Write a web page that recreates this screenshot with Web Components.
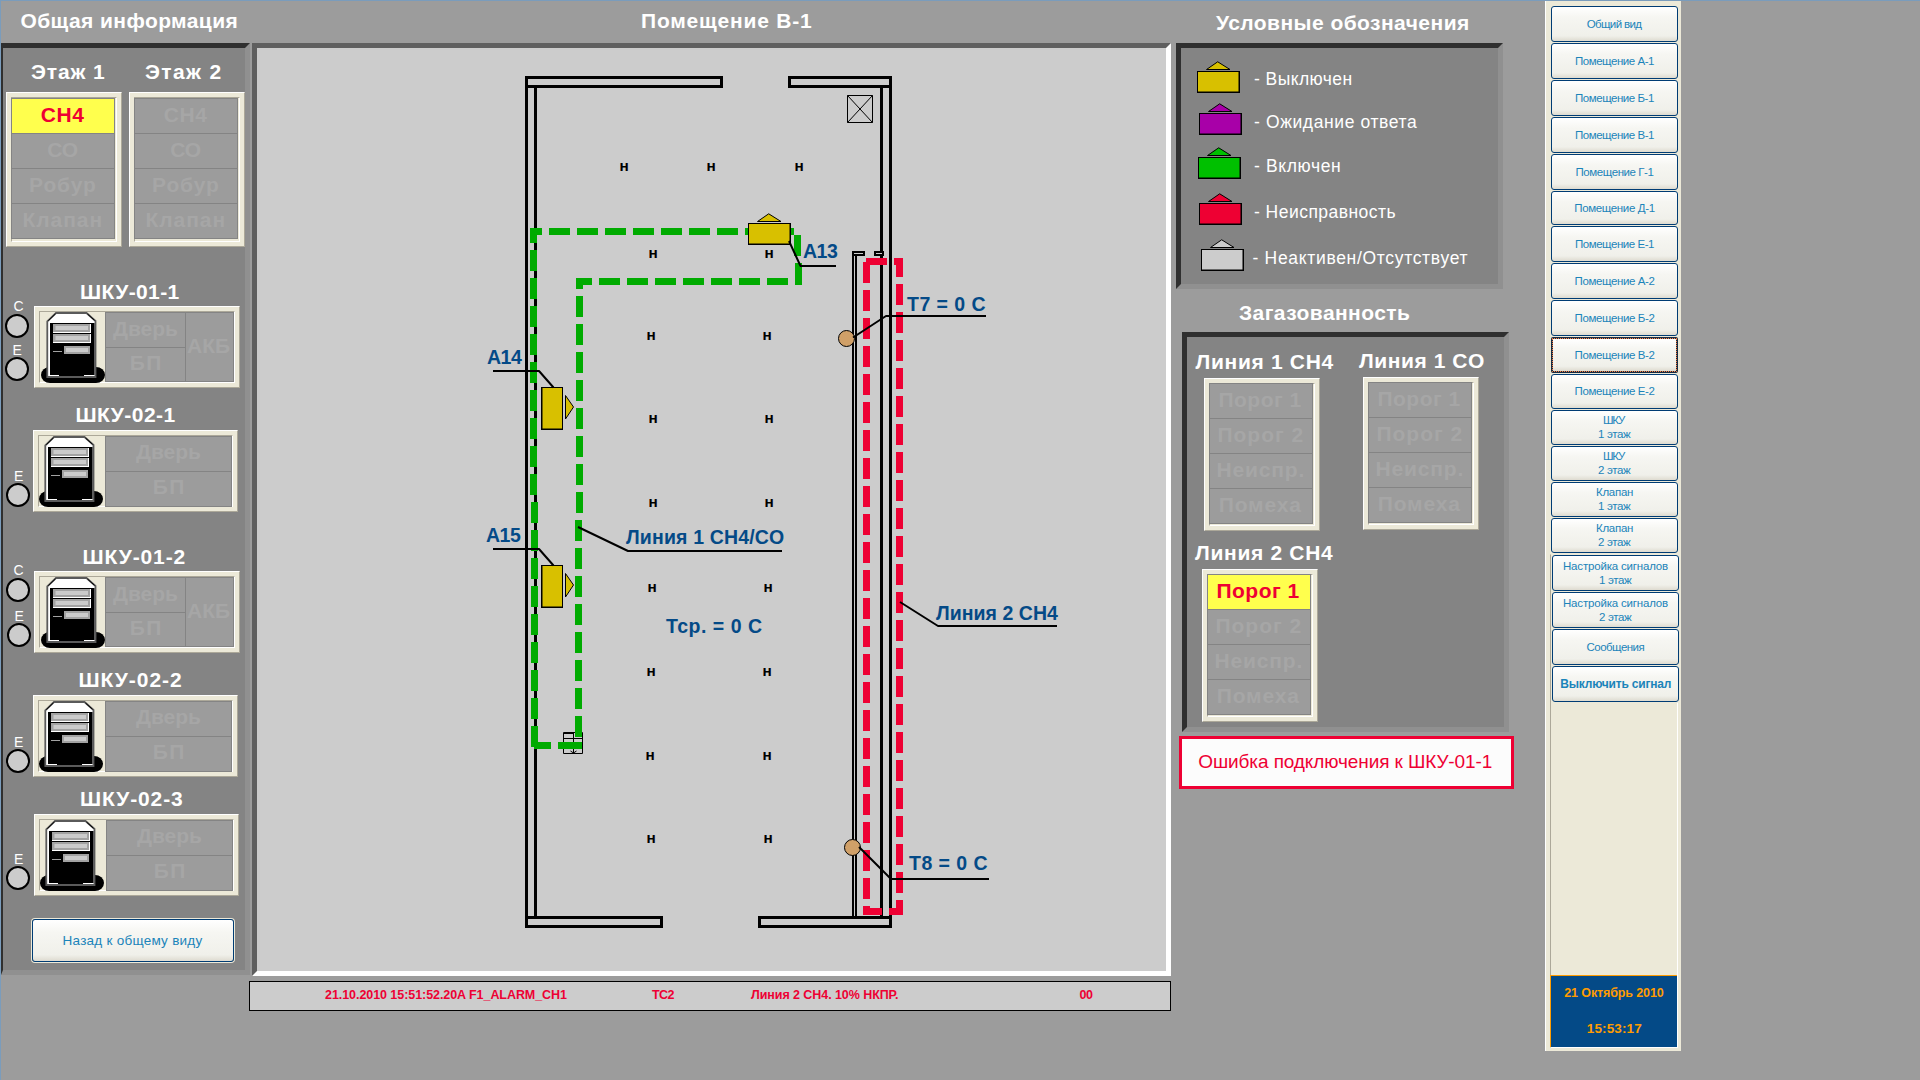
<!DOCTYPE html>
<html lang="ru">
<head>
<meta charset="utf-8">
<title>Помещение В-1</title>
<style>
  html, body { margin: 0; padding: 0; }
  body { width: 1920px; height: 1080px; overflow: hidden; background: #9c9c9c; font-family: "Liberation Sans", Arial, sans-serif; }
</style>
</head>
<body>
<scada-screen></scada-screen>
<script>
const ctx = document.createElement('canvas').getContext('2d');
const FAMILY = '"Liberation Sans", Arial, sans-serif';

/* Text whose box is its ink: w = width, h = capital height, s = font size. */
class InkText extends HTMLElement {
  connectedCallback() {
    if (this.shadowRoot) return;
    const root = this.attachShadow({ mode: 'open' });
    const w = +this.getAttribute('w'), h = +(this.getAttribute('h') || 15);
    const s = +(this.getAttribute('s') || 21), weight = this.getAttribute('weight') || 'bold';
    const family = this.hasAttribute('wide') ? '"DejaVu Sans", sans-serif' : FAMILY;
    const text = this.textContent;
    ctx.font = `${weight} ${s}px ${family}`;
    const m = ctx.measureText(text);
    const ink = m.actualBoundingBoxLeft + m.actualBoundingBoxRight;
    const ls = text.length > 1 ? (w - ink) / (text.length - 1) : 0;
    const asc = Math.round(s * .905), desc = Math.round(s * .212);
    root.innerHTML = `<style>
      :host { display: flow-root; flex: none; width: ${w}px; height: ${h}px; }
      span { display: block; white-space: pre; width: max-content; font: ${weight} ${s}px/${asc + desc}px ${family};
        letter-spacing: ${ls.toFixed(3)}px; margin: ${h - asc}px 0 0 ${m.actualBoundingBoxLeft.toFixed(2)}px; }
    </style><span><slot></slot></span>`;
  }
}
customElements.define('ink-text', InkText);

const define = (name, css, html) => customElements.define(name, class extends HTMLElement {
  connectedCallback() {
    if (this.shadowRoot) return;
    this.attachShadow({ mode: 'open' }).innerHTML = `<style>${css}</style>` + (typeof html === 'function' ? html(this) : html);
  }
});

define('sunken-panel', `
  :host { display: block; box-sizing: border-box; flex: none; background: #848484; border: 5px solid;
    border-color: #2f2f2f #909090 #909090 #2f2f2f; }`, '<slot></slot>');

define('bevel-frame', `
  :host { display: block; box-sizing: border-box; flex: none; background: #ece9d8; padding: 4px;
    border: 1px solid; border-color: #fff #aca899 #aca899 #fff; }
  div { box-sizing: border-box; height: 100%; display: flex; border: 1px solid; border-color: #aca899 #fff #fff #aca899; }`,
  '<div><slot></slot></div>');

/* Four stacked alarm cells inside a bevelled frame. */
define('level-box', `
  :host { display: block; }
  bevel-frame { width: 116px; height: 155px; }
  .grid { box-sizing: border-box; width: 104px; height: 141px; margin-left: -1px; flex: none; background: #848484;
    display: flex; flex-direction: column; gap: 1px; padding: 1px; }
  :host([tight]) bevel-frame { height: 153px; }
  :host([tight]) .grid { margin-top: -1px; }
  .c { height: 34px; display: flex; align-items: center; justify-content: center; background: #9c9c9c; color: #a6a6a6;
    box-sizing: border-box; padding: 0 1px 3px 0; }
  .on { background: #ffff4d; color: #ee0033; }`,
  el => {
    const items = el.getAttribute('items').split('|').map(t => t.split(':'));
    return `<bevel-frame><div class="grid">${items.map(([t, w], i) =>
      `<div class="c ${i === 0 && el.hasAttribute('alarm') ? 'on' : ''}"><ink-text w="${w}">${t}</ink-text></div>`).join('')}</div></bevel-frame>`;
  });

define('cabinet-icon', `:host { display: block; flex: none; width: 65px; height: 71px; } svg { display: block; overflow: visible; }`,
  `<svg width="65" height="71" viewBox="0 0 65 71">
    <rect x="1" y="55" width="64" height="16" rx="9" ry="8"/>
    <path d="M7.3 65V9.3L16 1H46.500L55.500 9V65Z" fill="#fff" stroke="#5a5a5a" stroke-width="1.8"/>
    <path d="M15.500 1.800L8.300 8.800M47.500 2L54.500 8.300" stroke="#000" stroke-width="1"/>
    <path d="M10 11H54.500V63H44V64H19V63H10Z"/>
    <path d="M13 12H51V21H13ZM13 22H51V31H13Z" fill="#fff"/>
    <path d="M13 12H50V20H13ZM13 22H50V30H13ZM24 34H50V42H24Z" fill="#a2a2a2"/>
    <path d="M15.500 14H48V18H15.500ZM15.500 24H48V28H15.500ZM26 36H48V40H26Z" fill="#cbcbcb"/>
    <path d="M13 39.500H22" stroke="#a2a2a2"/>
  </svg>`);

/* One cabinet: title, lamps at the left, status table at the right. */
define('cabinet-unit', `
  :host { display: block; color: #fff; }
  .body { display: flex; align-items: flex-end; height: 82px; margin-top: 8px; }
  :host([close]) .body { margin-top: 7px; }
  .lamps { flex: none; display: flex; flex-direction: column; }
  .lamp { box-sizing: border-box; width: 24px; height: 24px; border: 2px solid #000; border-radius: 50%; background: #ccc; }
  .table { flex: 1; display: flex; gap: 1px; background: #848484; box-sizing: border-box; padding: 1px; height: 70px; color: #a6a6a6; }
  .table.two { height: 71px; }
  .col { display: flex; flex-direction: column; gap: 1px; flex: 1; }
  .c { flex: 1; display: flex; align-items: center; justify-content: center; background: #9c9c9c; box-sizing: border-box; padding-bottom: 3px; }
  .akb { flex: none; width: 47px; }
  .akb .c { padding: 0 2px 4px 0; }
  .two .c { padding-bottom: 4px; }
  .two .c + .c { padding-bottom: 5px; }`,
  el => {
    const a = n => +el.getAttribute(n);
    const lamps = JSON.parse(el.getAttribute('lamps'));
    const akb = el.hasAttribute('akb');
    return `<ink-text w="${a('tw')}" style="margin-left:${a('tx')}px">${el.getAttribute('name')}</ink-text>
    <div class="body">
      <div class="lamps" style="width:${a('bx')}px;padding-bottom:${a('pb')}px">${lamps.map(([t, lx, cx, top, gap]) =>
        `<ink-text w="8.500" h="9" s="14" weight="normal" style="margin:${top}px 0 ${gap}px ${lx}px">${t}</ink-text><div class="lamp" style="margin-left:${cx}px"></div>`).join('')}</div>
      <bevel-frame style="width:${a('bw')}px;height:82px">
        <cabinet-icon style="margin:0 ${a('im')}px 0 ${a('io')}px"></cabinet-icon>
        <div class="table ${akb ? '' : 'two'}"><div class="col">
          <div class="c"><ink-text w="65">Дверь</ink-text></div><div class="c"><ink-text w="29.500">БП</ink-text></div></div>
          ${akb ? '<div class="col akb"><div class="c"><ink-text w="43">АКБ</ink-text></div></div>' : ''}
        </div>
      </bevel-frame>
    </div>`;
  });

define('xp-button', `
  :host { display: flex; flex-direction: column; align-items: center; box-sizing: border-box; flex: none; color: #1b84ba;
    border: 1px solid #003c74; border-radius: 3px; background: linear-gradient(#fff, #f6f6f2 30%, #f0f0ea 85%, #dedbd0);
    box-shadow: 0 0 0 1px #ece9d8; }
  :host([focused]) { border-width: 2px; border-color: #172c44; outline: 1px dotted #ff8040; outline-offset: -2px; border-radius: 2px; }`,
  '<slot></slot>');

const beacon = (fill, x = 0, y = 0) => `<g transform="translate(${x} ${y})">
  <path d="M9.500 8.500L20.700 .8L33 8.500Z" fill="${fill}" stroke="#000"/>
  <rect x="0" y="10" width="43" height="22"/><rect x="1" y="11" width="40.500" height="19.500" fill="${fill}"/></g>`;

define('beacon-icon', `:host { display: block; flex: none; } svg { display: block; }`,
  el => `<svg width="43" height="32">${beacon(el.getAttribute('color'))}</svg>`);

define('legend-panel', `
  :host { display: block; }
  sunken-panel { width: 327px; height: 246px; padding-top: 13px; color: #fff; }
  .row { display: flex; height: 32px; align-items: flex-start; }`,
  () => `<sunken-panel>${[
    ['#d8c000', 16, 0, 'Выключен', 73, 97.5, 12],
    ['#a800a8', 18, 10, 'Ожидание ответа', 73, 163, 13],
    ['#00c000', 17, 12, 'Включен', 73, 86, 13],
    ['#ee0033', 18, 14, 'Неисправность', 73, 141.5, 13],
    ['#cccccc', 20, 14, 'Неактивен/Отсутствует', 71.5, 215, 13]
  ].map(([c, x, mt, t, tx, w, ty]) => `<div class="row" style="margin:${mt}px 0 0 ${x}px"><beacon-icon color="${c}"></beacon-icon>
    <ink-text w="${w}" h="12" s="17.500" weight="normal" style="margin:${ty}px 0 0 ${tx - x - 43}px">- ${t}</ink-text></div>`).join('')}</sunken-panel>`);

define('gas-panel', `
  :host { display: block; color: #fff; }
  sunken-panel { width: 327px; height: 400px; }
  .row { display: flex; height: 194px; }
  .col { flex: none; display: flex; flex-direction: column; }
  level-box { margin-top: 9px; }`,
  () => {
    const items = 'Порог 1:82|Порог 2:84|Неиспр.:86|Помеха:81.5';
    return `<sunken-panel>
      <div class="row">
        <div class="col" style="margin:17px 0 0 8.500px;width:163.500px"><ink-text w="138">Линия 1 CH4</ink-text><level-box tight items="${items}" style="margin-left:8.500px"></level-box></div>
        <div class="col" style="margin-top:16px"><ink-text w="125">Линия 1 CO</ink-text><level-box tight items="${items}" style="margin-left:4px"></level-box></div>
      </div>
      <div class="row"><div class="col" style="margin:14px 0 0 8px"><ink-text w="138">Линия 2 CH4</ink-text><level-box tight alarm items="${items}" style="margin-left:7px"></level-box></div></div>
    </sunken-panel>`;
  });

/* Drawing of the room; coordinates are those of the whole screen. */
define('floor-plan', `
  :host { display: block; position: relative; box-sizing: border-box; width: 919px; height: 933px; flex: none;
    background: #ccc; border: 5px solid; border-color: #5f5f5f #fff #fff #5f5f5f; }
  svg { display: block; }
  ink-text { position: absolute; color: #044a87; }
  ink-text.h { color: #000; }`,
  () => {
    const box = (x1, y1, x2, y2, s) => `<rect x="${x1 + s / 2}" y="${y1 + s / 2}" width="${x2 - x1 - s}" height="${y2 - y1 - s}" stroke-width="${s}"/>`;
    const bar = (x1, y1, x2, y2) => `M${x1} ${y1}H${x2}V${y2}H${x1}Z`;
    const run = (vertical, c, from, to, start) => {
      let d = '';
      for (let p = start; p < to; p += 28) {
        const a = Math.max(p, from), b = Math.min(p + 21, to);
        if (b > a) d += vertical ? bar(c, a, c + 7, b) : bar(a, c, b, c + 7);
      }
      return d;
    };
    const green = run(0, 228, 530, 794, 521) + run(1, 530, 228, 500, 222) + run(1, 531, 502, 747, 502)
      + run(0, 278, 576, 790, 571) + run(1, 576, 278, 515, 268) + run(1, 575, 520, 737, 520)
      + bar(794, 235, 801, 256) + bar(795, 263, 802, 285) + bar(534, 742, 551, 749) + bar(558, 742, 582, 749);
    const red = bar(866, 258, 887, 265) + bar(894, 258, 903, 265) + run(1, 863, 262, 915, 262) + run(1, 896, 258, 915, 256)
      + bar(863, 908, 882, 915) + bar(889, 908, 903, 915);
    const hs = [[624,171],[711,171],[799,171],[653,258],[769,258],[651,340],[767,340],[653,423],[769,423],[653,507],[769,507],
      [652,592],[768,592],[651,676],[767,676],[650,760],[767,760],[651,843],[768,843]];
    const side = y => `<rect x="541" y="${y}" width="22" height="43"/><rect x="542.500" y="${y + 1}" width="19.500" height="40.500" fill="#d8c000"/>
      <path d="M565.500 ${y + 8.5}L573.500 ${y + 20}L565.500 ${y + 32}Z" fill="#d8c000" stroke="#000"/>`;
    const at = (t, x, base, w) => `<ink-text w="${w}" h="14" s="19.500" style="left:${x - 257}px;top:${base - 14 - 48}px">${t}</ink-text>`;
    return `<svg width="909" height="923" viewBox="257 48 909 923">
      <path d="M525 76h3v852h-3ZM534 88h3v828h-3ZM880 88h3v828h-3ZM889 76h3v852h-3ZM852 251h2v665h-2ZM855 256h2v660h-2Z"/>
      <g fill="#ccc" stroke="#000">${box(525,76,723,88,3)}${box(788,76,892,88,3)}${box(525,916,663,928,3)}${box(758,916,892,928,3)}
        ${box(852,251,865,256,2)}${box(874,251,884,256,2)}</g>
      <path d="M847.500 95.500h25v27h-25ZM847.500 95.500l25 27M872.500 95.500l-25 27" fill="none" stroke="#000"/>
      <path d="M563.500 732.500h19v21h-19ZM563 733.500h11M573.500 733v20M564 738.500h18M573 743.500h9M570.500 751l3 2 3-2" fill="none" stroke="#000"/>
      <path d="${green}" fill="#00ab00"/><path d="${red}" fill="#ee0033"/>
      ${beacon('#d8c000', 748, 213)}${side(387)}${side(565)}
      <g fill="#d0a068" stroke="#000"><circle cx="846.500" cy="338.500" r="8"/><circle cx="852.500" cy="847.500" r="8"/></g>
      <g fill="none" stroke="#000" stroke-width="2" stroke-linejoin="round">
        <path d="M800 266H836M789 241L800.500 266" /><path d="M493 371H539L553.500 387.500M493 549H539L553.500 565.500"/>
        <path d="M578 527L628 551H782M853 337.500L886 316H986M900 602L938 626H1057M859 847L891 879H989"/></g>
    </svg>
    ${hs.map(([x, y]) => `<ink-text class="h" wide w="8" h="8" s="11" style="left:${x - 3.5 - 257}px;top:${y - 7 - 48}px">H</ink-text>`).join('')}
    ${at('A13', 803, 258, 35)}${at('A14', 487, 364, 35)}${at('A15', 486, 542, 35)}${at('T7 = 0 C', 907, 311, 78.5)}${at('T8 = 0 C', 909, 870, 78.5)}
    ${at('Линия 1 CH4/CO', 626, 544, 158)}${at('Линия 2 CH4', 936, 620, 122)}${at('Тср. = 0 C', 666, 633, 96)}`;
  });

define('alarm-bar', `
  :host { display: flex; box-sizing: border-box; width: 922px; height: 30px; border: 1px solid #000; background: #ccc; color: #ee0033; padding: 8px 0 0 75px; }`,
  `<ink-text w="242.500" h="9" s="12.500">21.10.2010 15:51:52.20A F1_ALARM_CH1</ink-text>
   <ink-text w="22.500" h="9" s="12.500" style="margin-left:84.500px">TC2</ink-text>
   <ink-text w="147" h="9" s="12.500" style="margin-left:76.500px">Линия 2 CH4. 10% НКПР.</ink-text>
   <ink-text w="13.500" h="9" s="12.500" style="margin-left:181.500px">00</ink-text>`);

define('nav-column', `
  :host { display: flex; flex-direction: column; box-sizing: border-box; flex: none; width: 136px; height: 1050px; background: #ece9d8; border-left: 1px solid #fff; padding-top: 5px; }
  xp-button { width: 127px; margin: 0 0 1px 5px; }
  .well { box-sizing: border-box; width: 128px; height: 494px; margin: 0 0 0 4px; border: 1px solid; border-color: transparent #fff #fff #aca899; display: flex; flex-direction: column; }
  .well xp-button { margin: 0 0 1px 1px; }
  .clock { box-sizing: border-box; width: 127px; height: 72px; margin: auto 0 0 -1px; background: #044a87; color: #ff9c00; border: solid #ff9c00; border-width: 1px 0 0 1px;
    display: flex; flex-direction: column; align-items: center; }`,
  () => {
    const btn = (height, lines, extra = '') => `<xp-button ${extra} style="height:${height}px">${lines.map(([t, w, mt, weight]) =>
      `<ink-text w="${w}" h="9" s="${weight ? 12 : 11.5}" weight="${weight || 'normal'}" style="margin-top:${mt}px">${t}</ink-text>`).join('')}</xp-button>`;
    const room = (n, h = 36, w = 79, extra) => btn(h, [['Помещение ' + n, w, extra ? 11 : h === 36 ? 12 : 11]], extra);
    return btn(36, [['Общий вид', 55.5, 12]]) + room('А-1') + room('Б-1') + room('В-1') + room('Г-1', 36, 78)
      + room('Д-1', 34, 80.5) + room('Е-1') + room('А-2', 36, 80) + room('Б-2', 36, 80) + room('В-2', 36, 80, 'focused') + room('Е-2', 35, 80)
      + btn(35, [['ШКУ', 23, 4], ['1 этаж', 33, 5]]) + btn(35, [['ШКУ', 23, 4], ['2 этаж', 33, 5]])
      + btn(35, [['Клапан', 37, 4], ['1 этаж', 33, 5]]) + btn(35, [['Клапан', 37, 4], ['2 этаж', 33, 5]])
      + `<div class="well">${btn(36, [['Настройка сигналов', 105, 5], ['1 этаж', 33, 5]]) + btn(36, [['Настройка сигналов', 105, 5], ['2 этаж', 33, 5]])
      + btn(36, [['Сообщения', 58, 12]]) + btn(36, [['Выключить сигнал', 110.5, 12, 'bold']])}
      <div class="clock"><ink-text w="99.500" h="9" s="12.500" style="margin-top:12px">21 Октябрь 2010</ink-text><ink-text w="54.500" h="10" s="13.500" style="margin-top:26px">15:53:17</ink-text></div></div>`;
  });

define('overview-panel', `
  :host { display: block; color: #fff; }
  sunken-panel { width: 249px; height: 932px; border-left-width: 2px; display: flex; flex-direction: column; }
  .floors { display: flex; gap: 7px; margin: 16px 0 0 3px; height: 183px; }
  .floors > div { width: 116px; }
  level-box { margin-top: 13px; }
  .back { width: 202px; height: 43px; margin: 23px 0 0 29px; }`,
  () => {
    const items = 'CH4:43.5|CO:30.5|Робур:65|Клапан:78';
    return `<sunken-panel>
      <div class="floors">
        <div><ink-text w="74" style="margin-left:25px">Этаж 1</ink-text><level-box alarm items="${items}"></level-box></div>
        <div><ink-text w="75.500" style="margin-left:16px">Этаж 2</ink-text><level-box items="${items}"></level-box></div>
      </div>
      <cabinet-unit akb close name="ШКУ-01-1" tx="78" tw="98.500" bx="31" bw="206" io="0" im="0" pb="7" lamps='[["C",10.5,2,0,3],["E",10.5,2,8,2]]' style="margin-top:37px"></cabinet-unit>
      <cabinet-unit name="ШКУ-02-1" tx="73.500" tw="99" bx="30" bw="205" io="-1" im="2" pb="5" lamps='[["E",12,3,0,2]]' style="margin-top:19px"></cabinet-unit>
      <cabinet-unit akb close name="ШКУ-01-2" tx="80.500" tw="101" bx="31" bw="206" io="0" im="0" pb="6" lamps='[["C",10.5,3,0,3],["E",12.5,4,10,2]]' style="margin-top:37px"></cabinet-unit>
      <cabinet-unit name="ШКУ-02-2" tx="76.500" tw="101.500" bx="30" bw="205" io="-1" im="2" pb="4" lamps='[["E",12,3,0,2]]' style="margin-top:19px"></cabinet-unit>
      <cabinet-unit name="ШКУ-02-3" tx="78" tw="101" bx="31" bw="205" io="-1" im="2" pb="6" lamps='[["E",12,3,0,2]]' style="margin-top:14px"></cabinet-unit>
      <xp-button class="back"><ink-text w="139" h="10" s="13.500" weight="normal" style="margin-top:15px">Назад к общему виду</ink-text></xp-button>
    </sunken-panel>`;
  });

define('error-banner', `
  :host { display: flex; align-items: center; justify-content: center; box-sizing: border-box; width: 335px; height: 53px; border: 3px solid #ee0033; background: #fcfcfc; color: #ee0033; padding: 0 3px 3px 0; }`,
  '<ink-text w="293.500" h="14" s="19" weight="normal">Ошибка подключения к ШКУ-01-1</ink-text>');

define('scada-screen', `
  :host { display: flex; box-sizing: border-box; width: 1920px; height: 1080px; border: solid #7a9cbc; border-width: 1px 0 0 1px; color: #fff; overflow: hidden; background: #9c9c9c; }
  .col { flex: none; display: flex; flex-direction: column; }
  .left { width: 248px; } .mid { width: 922px; } .right { width: 374px; }
  overview-panel { margin-top: 15px; }
  floor-plan { margin: 15px 0 5px 3px; }
  legend-panel { margin: 13px 0 16px 5px; }
  gas-panel { margin: 12px 0 4px 11px; }
  error-banner { margin-left: 8px; }`,
  `<div class="col left"><ink-text w="216" style="margin:12px 0 0 19.500px">Общая информация</ink-text><overview-panel></overview-panel></div>
   <div class="col mid"><ink-text w="170" style="margin:12px 0 0 393px">Помещение В-1</ink-text><floor-plan></floor-plan><alarm-bar></alarm-bar></div>
   <div class="col right"><ink-text w="252" style="margin:14px 0 0 45px">Условные обозначения</ink-text><legend-panel></legend-panel>
     <ink-text w="171" style="margin-left:68px">Загазованность</ink-text><gas-panel></gas-panel><error-banner></error-banner></div>
   <nav-column></nav-column>`);
</script>
</body>
</html>
